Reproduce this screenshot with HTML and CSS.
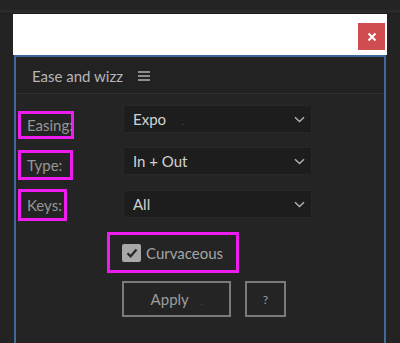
FILE: index.html
```html
<!DOCTYPE html>
<html>

<head>
	<meta charset="utf-8">
	<title>Ease and wizz</title>
	<meta name="viewport" content="width=device-width, initial-scale=1">
	<link rel="stylesheet" href="styles.css">
</head>

<body>
	<div class='topstrip'></div>
	<div class='frame'>
		<div class='titlebar'>
			<button class='titlebar__close' aria-label='Close'>
				<svg width='10' height='10' viewBox='0 0 10 10'>
					<path d='M1.5 1.5 L8.5 8.5 M8.5 1.5 L1.5 8.5' stroke='#fff' stroke-width='2' fill='none' />
				</svg>
			</button>
		</div>
		<div class='panel'>
			<div class='panel__head'>
				<span class='panel__title'>Ease and wizz</span>
				<svg class='panel__menu' width='12' height='10' viewBox='0 0 12 10'>
					<path d='M0 1 H12 M0 5 H12 M0 9 H12' stroke='#b4b4b4' stroke-width='1.6' fill='none' />
				</svg>
			</div>
			<div class='panel__body'>
				<div class='field'>
					<span class='tag tag--easing'>Easing:</span>
					<div class='select'>
						<span>Expo <span class='speck'>.</span></span>
						<svg class='select__arrow' width='11' height='7' viewBox='0 0 11 7'>
							<path d='M1 1.2 L5.5 5.5 L10 1.2' stroke='#b0b0b0' stroke-width='1.5' fill='none' />
						</svg>
					</div>
				</div>
				<div class='field'>
					<span class='tag tag--type'>Type:</span>
					<div class='select'>
						<span>In + Out</span>
						<svg class='select__arrow' width='11' height='7' viewBox='0 0 11 7'>
							<path d='M1 1.2 L5.5 5.5 L10 1.2' stroke='#b0b0b0' stroke-width='1.5' fill='none' />
						</svg>
					</div>
				</div>
				<div class='field'>
					<span class='tag tag--keys'>Keys:</span>
					<div class='select'>
						<span>All</span>
						<svg class='select__arrow' width='11' height='7' viewBox='0 0 11 7'>
							<path d='M1 1.2 L5.5 5.5 L10 1.2' stroke='#b0b0b0' stroke-width='1.5' fill='none' />
						</svg>
					</div>
				</div>
				<div class='tag tag--check'>
					<span class='checkbox'>
						<svg width='14' height='14' viewBox='0 0 14 14'>
							<path d='M2.5 7.2 L5.6 10.3 L11.5 3.6' stroke='#262626' stroke-width='2.2' fill='none' />
						</svg>
					</span>
					<span>Curvaceous</span>
				</div>
				<div class='actions'>
					<button class='btn btn--apply'>Apply <span class='speck'>.</span></button>
					<button class='btn btn--help'>?</button>
				</div>
			</div>
		</div>
	</div>
</body>

</html>
```

FILE: styles.css
```css
/* window */

* {
	box-sizing: border-box;
}

html,
body {
	margin: 0;
	padding: 0;
	font-family: Lato, 'Open Sans', sans-serif;
}

body {
	height: 343px;
	overflow: hidden;
	background: #232323;
	color: #b8b8b8;
}

.topstrip {
	height: 14px;
	border-top: 10px solid #242424;
	border-bottom: 1px solid #1c1c1c;
	background: #2a2a2a;
}

.frame {
	margin: 0 13px;
}

.titlebar {
	height: 41px;
	background: #fff;
	display: flex;
	justify-content: flex-end;
	align-items: flex-start;
	padding: 9px 2px 0 0;
}

.titlebar__close {
	width: 27px;
	height: 27px;
	border: 0;
	padding: 0;
	background: #cf4c51;
	display: flex;
	align-items: center;
	justify-content: center;
}

/* panel */

.panel {
	margin: 0 1px;
	height: 300px;
	border: 2px solid #3c6a9c;
	border-bottom: 0;
	background: #242424;
}

.panel__head {
	height: 37px;
	display: flex;
	align-items: center;
	gap: 15px;
	padding: 1px 0 0 16px;
	border-bottom: 1px solid #303030;
	background: #222;
}

.panel__title {
	font-size: 15px;
	color: #b6b6b6;
}

.panel__menu {
	margin-top: 1px;
}

.panel__body {
	padding: 11px 0 0 2px;
}

.field {
	display: grid;
	grid-template-columns: 105px 189px;
	align-items: start;
	height: 28px;
	margin-bottom: 14px;
}

.field:nth-child(2) {
	margin-bottom: 15px;
}

.tag {
	border: 3px solid #ee1cee;
	font-size: 15px;
	color: #969696;
	padding-left: 6px;
	display: flex;
	align-items: center;
}

.tag--easing {
	width: 56px;
	height: 28px;
	margin-top: 6px;
}

.tag--type {
	width: 55px;
	height: 30px;
	margin-top: 3px;
}

.tag--keys {
	width: 49px;
	height: 32px;
	margin-top: -1px;
}

.select {
	height: 28px;
	background: #1d1d1d;
	border: 1px solid #282828;
	border-radius: 2px;
	display: flex;
	align-items: center;
	justify-content: space-between;
	padding: 0 6px 0 9px;
	font-size: 15px;
	color: #d2d2d2;
}

.select__arrow {
	margin-top: 1px;
}

.speck {
	font-size: 9px;
	color: #555;
	margin-left: 12px;
}

.tag--check {
	width: 132px;
	height: 41px;
	margin: 5px 0 0 89px;
	padding-left: 12px;
	gap: 5px;
	color: #a4a4a4;
}

.checkbox {
	width: 19px;
	height: 18px;
	border-radius: 2px;
	background: #a8a8a8;
	display: flex;
	align-items: center;
	justify-content: center;
}

.actions {
	display: flex;
	gap: 14px;
	margin: 8px 0 0 104px;
}

.btn {
	height: 36px;
	background: transparent;
	border: 2px solid #7a7a7a;
	font-family: Lato, 'Open Sans', sans-serif;
	font-size: 15px;
	color: #9c9c9c;
	padding: 0;
}

.btn--apply {
	width: 109px;
}

.btn--apply .speck {
	margin-left: 8px;
	color: #4a4a4a;
}

.btn--help {
	width: 41px;
	font-size: 12px;
}
```
